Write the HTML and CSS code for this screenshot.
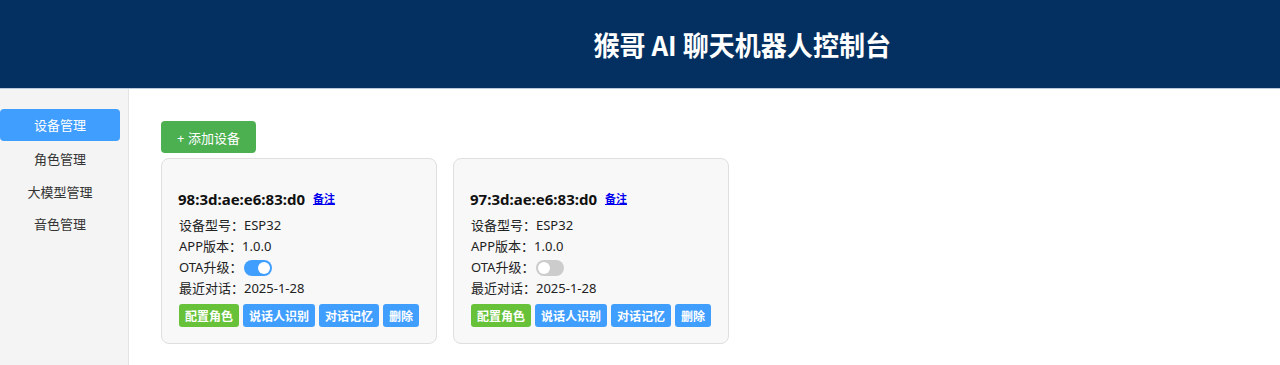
FILE: index.html
```html
<!DOCTYPE html>
<html lang="zh-CN">
<head>
<meta charset="utf-8">
<title>猴哥 AI 聊天机器人控制台</title>
<link rel="stylesheet" href="styles.css">
</head>
<body>
<header class="header">
  <h1 class="title">猴哥 AI 聊天机器人控制台</h1>
</header>
<div class="layout">
  <nav class="sidebar">
    <a class="nav-item active">设备管理</a>
    <a class="nav-item">角色管理</a>
    <a class="nav-item">大模型管理</a>
    <a class="nav-item">音色管理</a>
  </nav>
  <main class="main">
    <button class="add-btn">+ 添加设备</button>
    <div class="cards">
      <div class="card">
        <div class="card-title"><span class="mac">98:3d:ae:e6:83:d0</span><a class="note">备注</a></div>
        <div class="row">设备型号：ESP32</div>
        <div class="row">APP版本：1.0.0</div>
        <div class="row">OTA升级：<span class="toggle on"><span class="knob"></span></span></div>
        <div class="row">最近对话：2025-1-28</div>
        <div class="actions">
          <button class="btn green">配置角色</button>
          <button class="btn blue">说话人识别</button>
          <button class="btn blue">对话记忆</button>
          <button class="btn blue">删除</button>
        </div>
      </div>
      <div class="card">
        <div class="card-title"><span class="mac">97:3d:ae:e6:83:d0</span><a class="note">备注</a></div>
        <div class="row">设备型号：ESP32</div>
        <div class="row">APP版本：1.0.0</div>
        <div class="row">OTA升级：<span class="toggle"><span class="knob"></span></span></div>
        <div class="row">最近对话：2025-1-28</div>
        <div class="actions">
          <button class="btn green">配置角色</button>
          <button class="btn blue">说话人识别</button>
          <button class="btn blue">对话记忆</button>
          <button class="btn blue">删除</button>
        </div>
      </div>
    </div>
  </main>
</div>
</body>
</html>
```
FILE: styles.css
```css
* { box-sizing: border-box; }
html, body { margin: 0; padding: 0; }
body {
  font-family: "Noto Sans", "Noto Sans CJK SC", sans-serif;
  font-size: 13px;
  color: #222;
  background: #fff;
  height: 365px;
  overflow: hidden;
}
.header {
  height: 89px;
  background: #033060;
  border-bottom: 1px solid #b9c9dc;
  display: flex;
  align-items: center;
  justify-content: center;
  padding-left: 204px;
}
.title {
  margin: 0;
  color: #fff;
  font-family: "Noto Sans CJK SC", sans-serif;
  font-size: 27px;
  font-weight: 700;
  line-height: 1;
  transform: scaleX(0.965);
  white-space: nowrap;
}
.layout {
  display: flex;
  height: 276px;
}
.sidebar {
  width: 129px;
  flex: none;
  background: #f4f4f4;
  border-right: 1px solid #e3e3e3;
  padding: 20px 8px 0 0;
  display: flex;
  flex-direction: column;
}
.nav-item {
  display: block;
  height: 32.5px;
  line-height: 32px;
  text-align: center;
  color: #333;
  font-size: 13px;
  border-radius: 4px;
}
.nav-item.active {
  background: #409eff;
  color: #fff;
  height: 32px;
  margin-bottom: 2px;
}
.main {
  flex: 1;
  padding: 32px;
}
.add-btn {
  display: block;
  background: #4caf50;
  color: #fff;
  border: none;
  border-radius: 4px;
  height: 32px;
  width: 95px;
  padding: 0;
  font-family: "Noto Sans", "Noto Sans CJK SC", sans-serif;
  font-size: 13px;
  margin-bottom: 5px;
}
.cards {
  display: flex;
  gap: 16px;
}
.card {
  width: 276px;
  background: #f8f8f8;
  border: 1px solid #dfdfdf;
  border-radius: 8px;
  padding: 16px;
}
.card-title {
  margin-top: 12px;
  margin-bottom: 4px;
  height: 24px;
  display: flex;
  align-items: center;
  gap: 8px;
}
.mac {
  font-size: 15px;
  font-weight: 700;
  color: #111;
}
.note {
  color: #0000ee;
  font-size: 11px;
  font-weight: 700;
  text-decoration: underline;
  position: relative;
  top: -1px;
}
.row {
  height: 21px;
  line-height: 21px;
  display: flex;
  align-items: center;
  padding-left: 1px;
}
.toggle {
  display: inline-block;
  width: 28px;
  height: 16px;
  border-radius: 8px;
  background: #ccc;
  position: relative;
  margin-left: 2px;
}
.toggle .knob {
  position: absolute;
  top: 2px;
  left: 2px;
  width: 12px;
  height: 12px;
  border-radius: 50%;
  background: #fff;
}
.toggle.on { background: #409eff; }
.toggle.on .knob { left: 14px; }
.actions {
  display: flex;
  gap: 4px;
  margin-top: 5px;
  padding-left: 1px;
}
.btn {
  height: 23px;
  padding: 0 6px;
  border: none;
  border-radius: 3px;
  color: #fff;
  font-family: "Noto Sans CJK SC", sans-serif;
  font-size: 12px;
  font-weight: 700;
  line-height: 23px;
}
.btn.green { background: #67c23a; }
.btn.blue { background: #409eff; }
```
